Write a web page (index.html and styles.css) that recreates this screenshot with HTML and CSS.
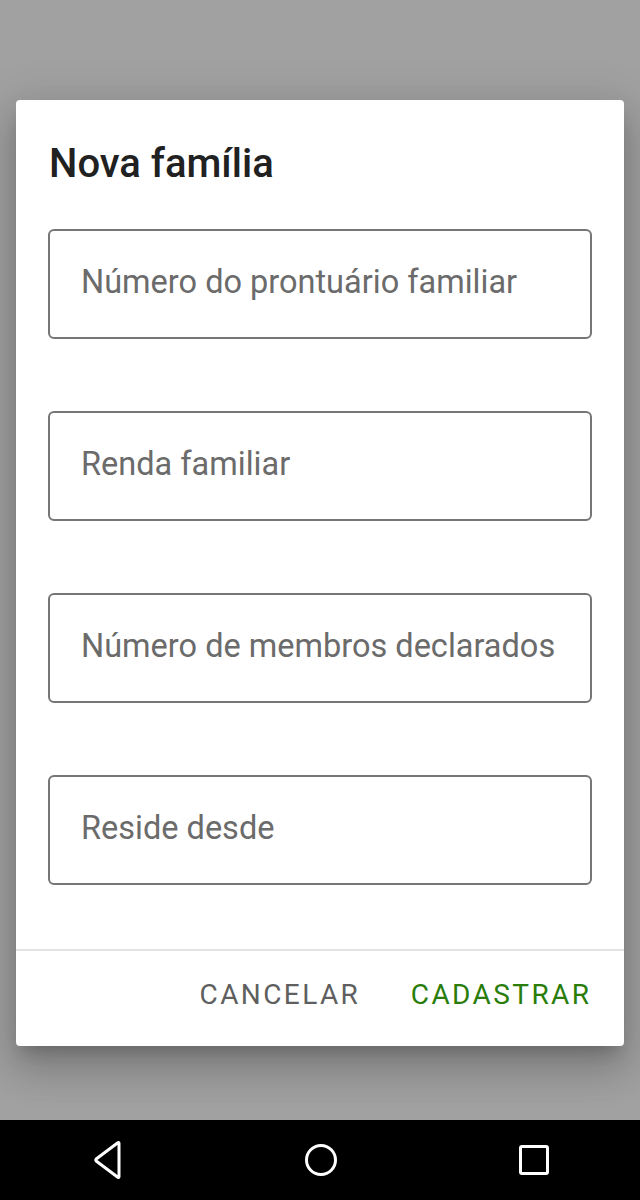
FILE: index.html
```html
<!DOCTYPE html>
<html lang="pt">
<head>
<meta charset="utf-8">
<link rel="stylesheet" href="styles.css">
</head>
<body>
<div class="screen">
  <div class="scrim">
    <div class="dialog">
      <h1 class="title">Nova família</h1>
      <div class="fields">
        <div class="field"><span class="placeholder">Número do prontuário familiar</span></div>
        <div class="field"><span class="placeholder">Renda familiar</span></div>
        <div class="field"><span class="placeholder">Número de membros declarados</span></div>
        <div class="field"><span class="placeholder">Reside desde</span></div>
      </div>
      <div class="actions">
        <button class="btn btn-cancel">CANCELAR</button>
        <button class="btn btn-ok">CADASTRAR</button>
      </div>
    </div>
  </div>
  <div class="navbar">
    <svg class="nav-icon" width="40" height="40" viewBox="0 0 40 40"><path d="M31 3.5 L31 36.5 Q31 38 29.8 37.2 L8.5 21.3 Q7 20 8.5 18.7 L29.8 2.8 Q31 2 31 3.5 Z" fill="none" stroke="#fff" stroke-width="3" stroke-linejoin="round"/></svg>
    <svg class="nav-icon" width="40" height="40" viewBox="0 0 40 40"><circle cx="20" cy="20" r="14.5" fill="none" stroke="#fff" stroke-width="3"/></svg>
    <svg class="nav-icon" width="40" height="40" viewBox="0 0 40 40"><rect x="6.5" y="6.5" width="27" height="27" rx="1.5" fill="none" stroke="#fff" stroke-width="3"/></svg>
  </div>
</div>
</body>
</html>
```
FILE: styles.css
```css
* { box-sizing: border-box; }
html, body { margin: 0; padding: 0; }
body {
  width: 640px;
  height: 1200px;
  font-family: Roboto, "Noto Sans", sans-serif;
  overflow: hidden;
}
.screen {
  display: flex;
  flex-direction: column;
  height: 1200px;
}
.scrim {
  height: 1120px;
  background: #a1a1a1;
  padding: 100px 16px 0;
}
.dialog {
  background: #fff;
  border-radius: 4px;
  height: 946px;
  display: flex;
  flex-direction: column;
  box-shadow: 0 11px 15px -7px rgba(0,0,0,.2), 0 24px 38px 3px rgba(0,0,0,.14), 0 9px 46px 8px rgba(0,0,0,.12);
}
.title {
  margin: 0;
  padding: 40px 32px 0 33px;
  font-size: 40px;
  line-height: 48px;
  font-weight: 500;
  color: #212121;
}
.fields {
  padding: 41px 32px 0;
  display: flex;
  flex-direction: column;
  gap: 72px;
  flex: 1;
}
.field {
  height: 110px;
  border: 2px solid #767676;
  border-radius: 6px;
  display: flex;
  align-items: center;
  padding-left: 31px;
}
.placeholder {
  font-size: 32.5px;
  color: #6b6b6b;
  position: relative;
  top: -2px;
}
.actions {
  border-top: 2px solid #e3e3e3;
  height: 97px;
  display: flex;
  justify-content: flex-end;
  align-items: center;
  padding: 0 35px 8px 0;
  gap: 53px;
}
.btn {
  background: none;
  border: 0;
  padding: 0;
  font-family: Roboto, sans-serif;
  font-size: 28px;
  font-weight: 400;
  letter-spacing: 2.4px;
  margin-right: -2.4px;
}
.btn-cancel { color: #5f5f5f; }
.btn-ok { color: #2a7d0a; }
.navbar {
  height: 80px;
  background: #000;
  display: flex;
  align-items: center;
  justify-content: space-between;
  padding: 0 86px 0 88px;
}
.nav-icon { display: block; }
```
